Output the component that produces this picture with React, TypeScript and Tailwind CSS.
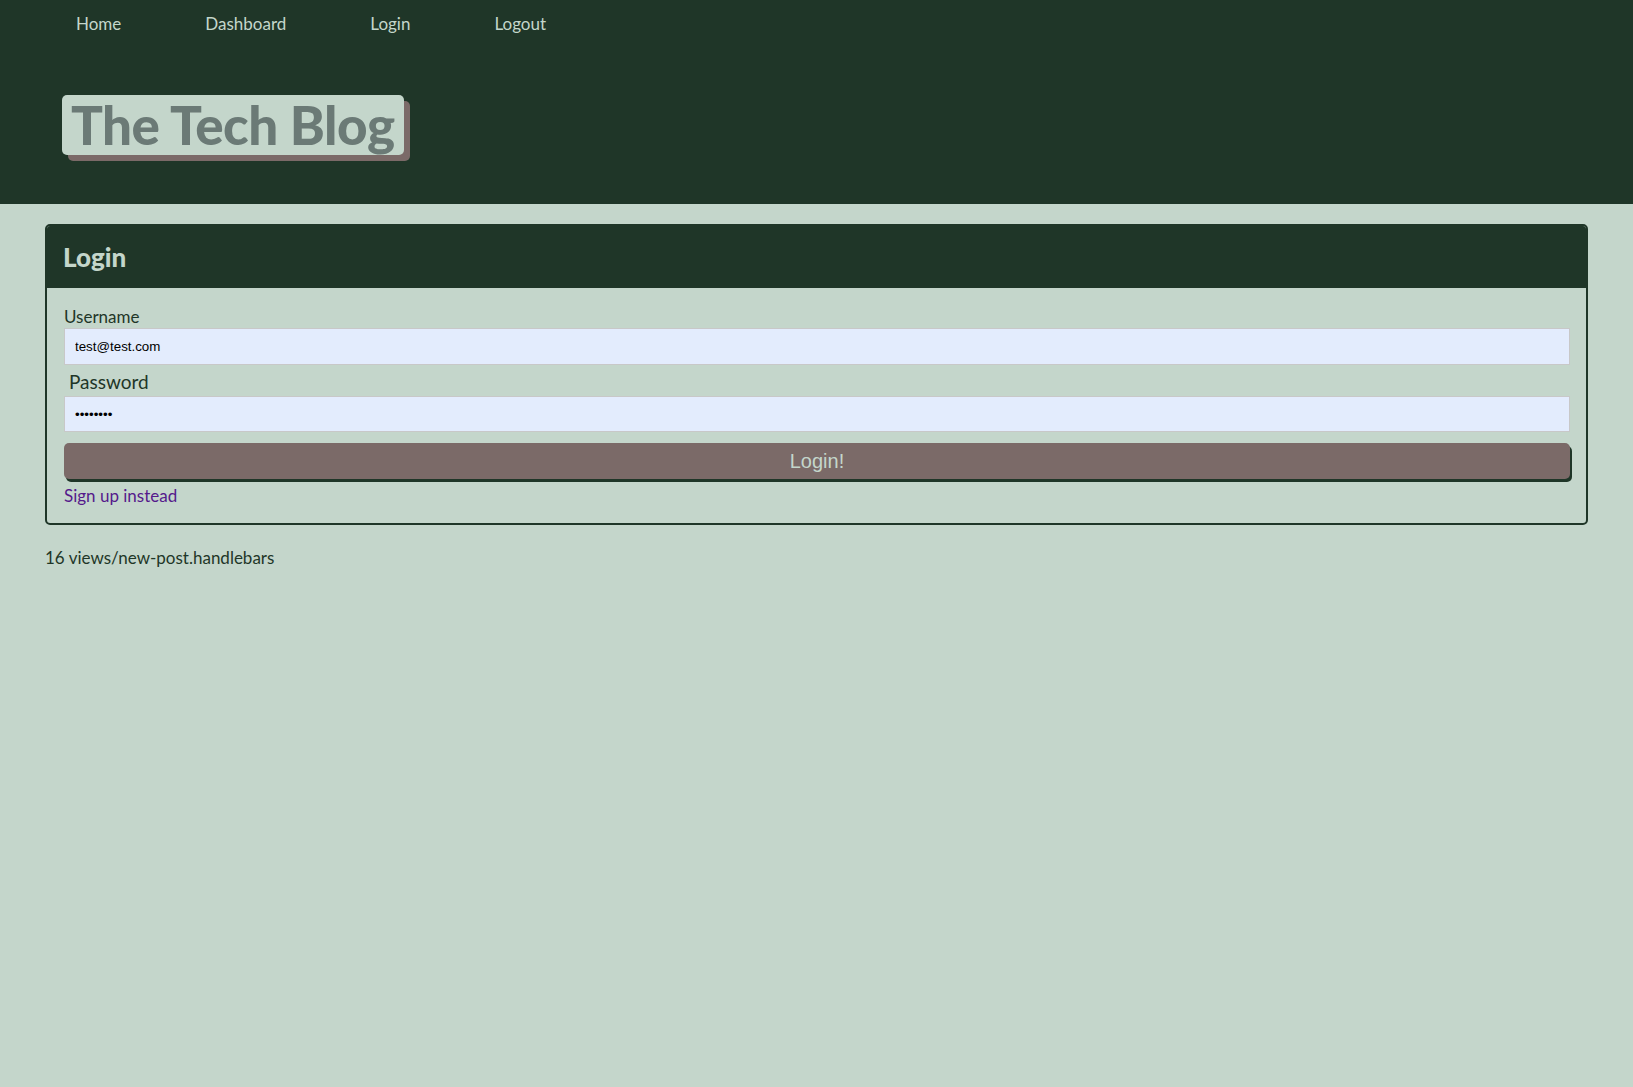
function Nav() {
  const links = ["Home", "Dashboard", "Login", "Logout"];
  return (
    <nav className="flex gap-[84px] pl-[76px] pt-[12px] text-[17px] leading-[24px] text-[#c4d6cb]">
      {links.map((l) => (
        <a key={l} href="#" className="no-underline">
          {l}
        </a>
      ))}
    </nav>
  );
}

function LoginCard() {
  return (
    <div className="rounded-[5px] border-2 border-[#1f3628] overflow-hidden">
      <div className="h-[62px] bg-[#1f3628] flex items-center px-[16px]">
        <h2 className="text-[26px] font-black text-[#c4d6cb]">Login</h2>
      </div>
      <form className="flex flex-col pl-[17px] pt-[19px] pb-[17px] pr-[16px]">
        <label className="text-[17px] leading-[20px] text-[#1f3628]">Username</label>
        <input
          className="mt-[1px] h-[37px] border border-[#c8c8c8] bg-[#e3ecfd] pl-[10px] text-[13.33px] text-black font-['Liberation_Sans',sans-serif] outline-none"
          defaultValue="test@test.com"
        />
        <label className="mt-[5px] pl-[5px] text-[19px] leading-[24px] text-[#1f3628]">Password</label>
        <input
          type="password"
          className="mt-[2px] h-[36px] border border-[#c8c8c8] bg-[#e3ecfd] pl-[10px] text-[13.33px] text-black font-['Liberation_Sans',sans-serif] outline-none"
          defaultValue="password"
        />
        <button
          type="button"
          className="mt-[11px] h-[36px] rounded-[5px] bg-[#7b6a68] text-[20px] text-[#c4d6cb] font-['Liberation_Sans',sans-serif] shadow-[2px_3px_0_#1f3628]"
        >
          Login!
        </button>
        <a href="#" className="mt-[7px] text-[17px] leading-[20px] text-[#551a8b]">
          Sign up instead
        </a>
      </form>
    </div>
  );
}

export default function App() {
  return (
    <div className="min-h-screen bg-[#c4d6cb] font-['Lato',sans-serif]">
      <header className="h-[204px] bg-[#1f3628]">
        <Nav />
        <div className="pl-[62px] mt-[59px]">
          <h1 className="inline-block h-[60px] rounded-[5px] bg-[#c4d6cb] px-[9px] text-[53px] leading-[60px] font-black tracking-[-0.5px] text-[#6b7a76] shadow-[6px_6px_0_#7b6a68]">
            The Tech Blog
          </h1>
        </div>
      </header>
      <main className="px-[45px] pt-[20px]">
        <LoginCard />
        <p className="mt-[22px] text-[17px] leading-[22px] text-[#1f3628]">16 views/new-post.handlebars</p>
      </main>
    </div>
  );
}
